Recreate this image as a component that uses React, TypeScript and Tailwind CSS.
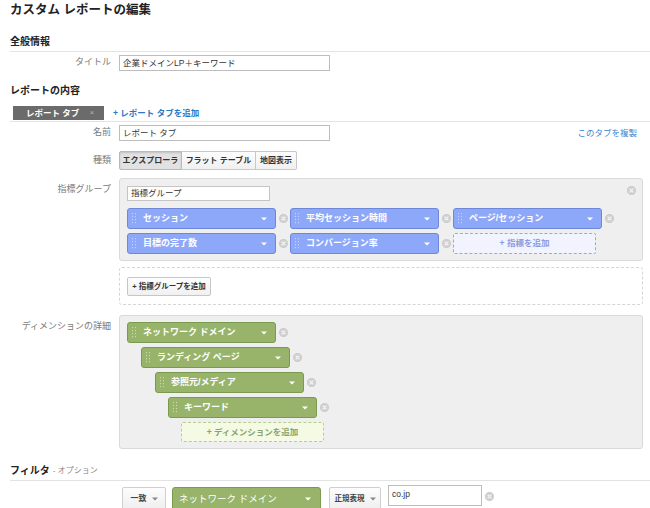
import React from "react";

function Grip({ color }: { color: string }) {
  return (
    <svg width="4" height="11" viewBox="0 0 4 11" className="shrink-0">
      {[0, 3, 6, 9].map((y) => (
        <g key={y} fill={color}>
          <rect x="0" y={y} width="1" height="1.2" />
          <rect x="3" y={y} width="1" height="1.2" />
        </g>
      ))}
    </svg>
  );
}

function Caret({ color = "#fff" }: { color?: string }) {
  return (
    <svg width="6" height="4" viewBox="0 0 6 4" className="shrink-0">
      <path d="M0 0.5 L6 0.5 L3 3.5 Z" fill={color} />
    </svg>
  );
}

function XCircle() {
  return (
    <svg width="9" height="9" viewBox="0 0 9 9" className="shrink-0">
      <circle cx="4.5" cy="4.5" r="4.2" fill="#d0d0d0" stroke="#c2c2c2" strokeWidth="0.6" />
      <path d="M3 3 L6 6 M6 3 L3 6" stroke="#f4f4f4" strokeWidth="1.1" strokeLinecap="round" />
    </svg>
  );
}

function Chip({ label, kind }: { label: string; kind: "blue" | "green" }) {
  const tone =
    kind === "blue"
      ? "bg-[#8ea8f9] border-[#6f87d8]"
      : "bg-[#97b46a] border-[#7a9a50]";
  const grip = kind === "blue" ? "#c4d2fc" : "#cadbb1";
  return (
    <div className="flex items-center">
      <div
        className={`flex h-[21px] w-[149px] items-center rounded-[3px] border pl-[4px] pr-[8px] ${tone}`}
      >
        <Grip color={grip} />
        <span className="ml-[7px] text-[9px] font-bold leading-none text-white">{label}</span>
        <span className="ml-auto">
          <Caret />
        </span>
      </div>
      <span className="ml-[3px] mr-[2px]">
        <XCircle />
      </span>
    </div>
  );
}

function Label({ children, center = false }: { children: React.ReactNode; center?: boolean }) {
  return (
    <div
      className={`w-[109px] shrink-0 pr-[8px] text-right text-[9px] text-[#7a7a7a] ${
        center ? "self-center" : "pt-[5px]"
      }`}
    >
      {children}
    </div>
  );
}

export default function App() {
  return (
    <div className="min-h-screen w-[650px] overflow-hidden bg-white font-['Liberation_Sans','Noto_Sans_CJK_JP',sans-serif] text-[#333]">
      <h1 className="h-[20px] pl-[10px] text-[12.5px] font-bold leading-[20px] text-[#222]">
        カスタム レポートの編集
      </h1>

      <div className="ml-[10px] mt-[14px] h-[18px] border-b border-[#e3e3e3] text-[10px] font-bold leading-[16px] text-[#222]">
        全般情報
      </div>

      <div className="mt-[3px] flex pl-[10px]">
        <Label center>タイトル</Label>
        <div className="flex h-[16px] w-[211px] items-center border border-[#bdbdbd] px-[3px] text-[8.5px] text-[#333]">
          企業ドメインLP＋キーワード
        </div>
      </div>

      <div className="ml-[10px] mt-[12px] h-[16px] text-[10px] font-bold leading-[16px] text-[#222]">
        レポートの内容
      </div>

      <div className="ml-[10px] mt-[7px] flex h-[16px] items-start border-b border-[#e3e3e3]">
        <div className="ml-[3px] flex h-[14px] w-[91px] items-center bg-[#6b6b6b] pl-[13px] text-[8.5px] font-bold text-white">
          レポート タブ
          <span className="ml-[10px] text-[8px] font-normal text-[#b5b5b5]">×</span>
        </div>
        <span className="ml-[9px] flex h-[14px] items-center text-[8.5px] font-bold text-[#2c77c2]">
          + レポート タブを追加
        </span>
      </div>

      <div className="mt-[3px] flex items-center pl-[10px]">
        <Label center>名前</Label>
        <div className="flex h-[16px] w-[211px] items-center border border-[#bdbdbd] px-[3px] text-[8.5px] text-[#333]">
          レポート タブ
        </div>
        <span className="ml-auto mr-[13px] text-[8.5px] text-[#3b86cc]">このタブを複製</span>
      </div>

      <div className="mt-[10px] flex pl-[10px]">
        <Label center>種類</Label>
        <div className="flex h-[19px] text-[8px] font-bold text-[#333]">
          <div className="flex w-[63px] items-center justify-center rounded-l-[2px] border border-[#b9b9b9] bg-[#e2e2e2] shadow-[inset_0_1px_2px_rgba(0,0,0,0.15)]">
            エクスプローラ
          </div>
          <div className="flex w-[74px] items-center justify-center border-y border-r border-[#c8c8c8] bg-gradient-to-b from-[#fdfdfd] to-[#f0f0f0]">
            フラット テーブル
          </div>
          <div className="flex w-[41px] items-center justify-center rounded-r-[2px] border-y border-r border-[#c8c8c8] bg-gradient-to-b from-[#fdfdfd] to-[#f0f0f0]">
            地図表示
          </div>
        </div>
      </div>

      <div className="mt-[8px] flex pl-[10px]">
        <Label>指標グループ</Label>
        <div className="relative w-[524px] rounded-[3px] border border-[#d9d9d9] bg-[#efefef] px-[7px] pb-[6px] pt-[7px]">
          <span className="absolute right-[6px] top-[7px]">
            <XCircle />
          </span>
          <div className="flex h-[15px] w-[143px] items-center border border-[#c4c4c4] bg-white px-[3px] text-[8.5px] text-[#333]">
            指標グループ
          </div>
          <div className="mt-[7px] flex">
            <Chip label="セッション" kind="blue" />
            <Chip label="平均セッション時間" kind="blue" />
            <Chip label="ページ/セッション" kind="blue" />
          </div>
          <div className="mt-[4px] flex">
            <Chip label="目標の完了数" kind="blue" />
            <Chip label="コンバージョン率" kind="blue" />
            <div className="flex h-[21px] w-[143px] items-center justify-center rounded-[2px] border border-dashed border-[#8ea8f9] bg-[#f1f4ff] text-[8.5px] font-bold text-[#8a9be0]">
              + 指標を追加
            </div>
          </div>
        </div>
      </div>

      <div className="ml-[119px] mt-[6px] h-[38px] w-[524px] rounded-[3px] border border-dashed border-[#d5d5d5] pl-[7px] pt-[9px]">
        <div className="flex h-[19px] w-[84px] items-center justify-center rounded-[2px] border border-[#c6c6c6] bg-gradient-to-b from-[#fefefe] to-[#f0f0f0] text-[7.5px] font-bold text-[#333]">
          + 指標グループを追加
        </div>
      </div>

      <div className="mt-[10px] flex pl-[10px]">
        <Label>ディメンションの詳細</Label>
        <div className="flex w-[524px] flex-col gap-[4px] rounded-[3px] border border-[#d9d9d9] bg-[#efefef] px-[7px] pb-[6px] pt-[6px]">
          <Chip label="ネットワーク ドメイン" kind="green" />
          <div className="ml-[14px]">
            <Chip label="ランディング ページ" kind="green" />
          </div>
          <div className="ml-[28px]">
            <Chip label="参照元/メディア" kind="green" />
          </div>
          <div className="ml-[41px]">
            <Chip label="キーワード" kind="green" />
          </div>
          <div className="ml-[54px] flex h-[20px] w-[143px] items-center justify-center rounded-[2px] border border-dashed border-[#b5cf8c] bg-[#f4fae4] text-[8.5px] font-bold text-[#8aa469]">
            + ディメンションを追加
          </div>
        </div>
      </div>

      <div className="ml-[10px] mt-[12px] flex h-[20px] items-center border-b border-[#e3e3e3]">
        <span className="text-[10px] font-bold text-[#222]">フィルタ</span>
        <span className="ml-[3px] text-[8px] text-[#888]">- オプション</span>
      </div>

      <div className="ml-[122px] mt-[6px] flex items-start">
        <div className="flex h-[24px] w-[44px] items-center justify-center gap-[5px] rounded-[2px] border border-[#cfcfcf] bg-gradient-to-b from-[#fdfdfd] to-[#eeeeee] text-[8px] font-bold text-[#444]">
          一致 <Caret color="#888" />
        </div>
        <div className="ml-[6px] flex h-[24px] w-[149px] items-center rounded-[3px] border border-[#7a9a50] bg-[#97b46a] pl-[6px] pr-[9px] text-[9.5px] text-white">
          ネットワーク ドメイン
          <span className="ml-auto">
            <Caret />
          </span>
        </div>
        <div className="ml-[8px] flex h-[24px] w-[52px] items-center justify-center gap-[5px] rounded-[2px] border border-[#cfcfcf] bg-gradient-to-b from-[#fdfdfd] to-[#eeeeee] text-[7.5px] font-bold text-[#444]">
          正規表現 <Caret color="#888" />
        </div>
        <div className="-mt-[2px] ml-[7px] h-[21px] w-[94px] border border-[#bdbdbd] px-[3px] pt-[2px] text-[8.5px] text-[#333]">
          co.jp
        </div>
        <span className="ml-[3px] mt-[5px]">
          <XCircle />
        </span>
      </div>
    </div>
  );
}
